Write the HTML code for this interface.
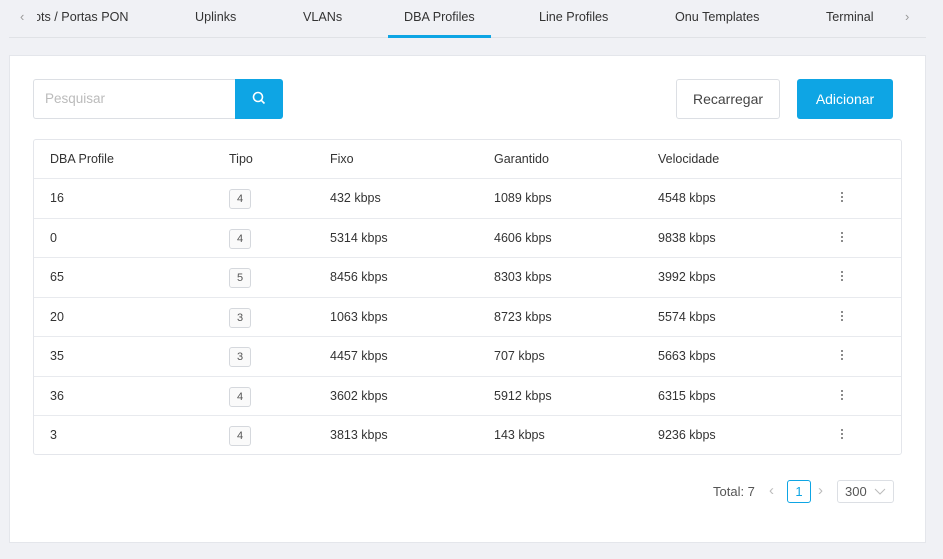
<!DOCTYPE html><html><head><style>
*{box-sizing:border-box;margin:0;padding:0}
body{width:943px;height:559px;background:#f0f1f5;font-family:"Liberation Sans",sans-serif;color:#333;font-size:13px;position:relative;overflow:hidden}
.a{position:absolute}
.tab{position:absolute;top:10px;font-size:12.6px;color:#333}
.card{left:9px;top:55px;width:917px;height:488px;background:#fff;border:1px solid #e4e6eb}
.tbl{left:33px;top:139px;width:869px;height:316px;border:1px solid #e4e6eb;border-radius:3px;background:#fff}
.row{position:absolute;left:0;width:867px;height:39.5px;border-top:1px solid #e8eaee}
.row span{position:absolute;top:12px;font-size:12.5px}
.b{position:absolute;top:10px;width:22px;height:20px;border:1px solid #d5d8dd;border-radius:3px;background:#fafafa;font-size:11px;text-align:center;line-height:18px;color:#555}
.dots{position:absolute;left:807px;top:13px;width:4px}
.dots i{display:block;width:2px;height:2px;background:#666;border-radius:1px;margin:0 0 2px 0}
</style></head><body>
<div class="a" style="left:20px;top:9px;color:#999">‹</div>
<div class="tab" style="left:37px;width:96px;overflow:hidden;white-space:nowrap"><span style="margin-left:-3px">ots / Portas PON</span></div>
<div class="tab" style="left:195px">Uplinks</div>
<div class="tab" style="left:303px">VLANs</div>
<div class="tab" style="left:404px">DBA Profiles</div>
<div class="tab" style="left:539px">Line Profiles</div>
<div class="tab" style="left:675px">Onu Templates</div>
<div class="tab" style="left:826px">Terminal</div>
<div class="a" style="left:905px;top:9px;color:#999">›</div>
<div class="a" style="left:9px;top:37px;width:917px;height:1px;background:#e0e2e6"></div>
<div class="a" style="left:388px;top:35px;width:103px;height:3px;background:#0ea5e4"></div>
<div class="a card"></div>
<div class="a" style="left:33px;top:79px;width:203px;height:40px;border:1px solid #dcdfe4;border-right:none;border-radius:3px 0 0 3px;background:#fff;color:#bbb;font-size:13.5px;padding:11px 11px">Pesquisar</div>
<div class="a" style="left:235px;top:79px;width:48px;height:40px;background:#0ea5e4;border-radius:0 3px 3px 0">
<svg width="48" height="40"><circle cx="23" cy="18" r="4.5" fill="none" stroke="#fff" stroke-width="1.6"/><line x1="26.3" y1="21.3" x2="29.5" y2="24.5" stroke="#fff" stroke-width="1.6"/></svg></div>
<div class="a" style="left:676px;top:79px;width:104px;height:40px;border:1px solid #dcdfe4;border-radius:3px;background:#fff;font-size:14px;text-align:center;line-height:38px;color:#444">Recarregar</div>
<div class="a" style="left:797px;top:79px;width:96px;height:40px;background:#0ea5e4;border-radius:3px;font-size:14px;text-align:center;line-height:40px;color:#fff">Adicionar</div>
<div class="a tbl">
<div class="row" style="top:0;border:none"><span style="left:16px;top:12px">DBA Profile</span><span style="left:195px">Tipo</span><span style="left:296px">Fixo</span><span style="left:460px">Garantido</span><span style="left:624px">Velocidade</span></div>
<div class="row" style="top:38px"><span style="left:16px">16</span><div class="b" style="left:195px">4</div><span style="left:296px">432 kbps</span><span style="left:460px">1089 kbps</span><span style="left:624px">4548 kbps</span><div class="dots"><i></i><i></i><i></i></div></div>
<div class="row" style="top:77.5px"><span style="left:16px">0</span><div class="b" style="left:195px">4</div><span style="left:296px">5314 kbps</span><span style="left:460px">4606 kbps</span><span style="left:624px">9838 kbps</span><div class="dots"><i></i><i></i><i></i></div></div>
<div class="row" style="top:117px"><span style="left:16px">65</span><div class="b" style="left:195px">5</div><span style="left:296px">8456 kbps</span><span style="left:460px">8303 kbps</span><span style="left:624px">3992 kbps</span><div class="dots"><i></i><i></i><i></i></div></div>
<div class="row" style="top:156.5px"><span style="left:16px">20</span><div class="b" style="left:195px">3</div><span style="left:296px">1063 kbps</span><span style="left:460px">8723 kbps</span><span style="left:624px">5574 kbps</span><div class="dots"><i></i><i></i><i></i></div></div>
<div class="row" style="top:196px"><span style="left:16px">35</span><div class="b" style="left:195px">3</div><span style="left:296px">4457 kbps</span><span style="left:460px">707 kbps</span><span style="left:624px">5663 kbps</span><div class="dots"><i></i><i></i><i></i></div></div>
<div class="row" style="top:235.5px"><span style="left:16px">36</span><div class="b" style="left:195px">4</div><span style="left:296px">3602 kbps</span><span style="left:460px">5912 kbps</span><span style="left:624px">6315 kbps</span><div class="dots"><i></i><i></i><i></i></div></div>
<div class="row" style="top:275px"><span style="left:16px">3</span><div class="b" style="left:195px">4</div><span style="left:296px">3813 kbps</span><span style="left:460px">143 kbps</span><span style="left:624px">9236 kbps</span><div class="dots"><i></i><i></i><i></i></div></div>
</div>
<div class="a" style="left:713px;top:484px;color:#555">Total: 7</div>
<div class="a" style="left:769px;top:482px;color:#bbb;font-size:15px">‹</div>
<div class="a" style="left:787px;top:480px;width:24px;height:23px;border:1px solid #0ea5e4;border-radius:3px;color:#0ea5e4;text-align:center;line-height:21px">1</div>
<div class="a" style="left:818px;top:482px;color:#bbb;font-size:15px">›</div>
<div class="a" style="left:837px;top:480px;width:57px;height:23px;border:1px solid #dcdfe4;border-radius:3px;color:#555;padding:3px 7px">300<svg style="position:absolute;left:36px;top:7px" width="12" height="8"><polyline points="1,1 6,6 11,1" fill="none" stroke="#bbb" stroke-width="1"/></svg></div>
</body></html>
